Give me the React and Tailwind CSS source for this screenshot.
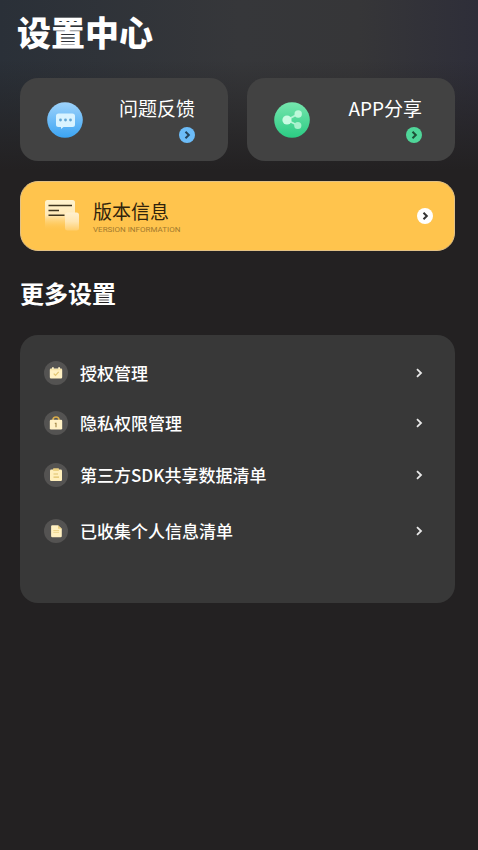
import { useId } from 'react';

const menuItems = [
  { label: '授权管理', icon: CalendarIcon, spacing: '' },
  { label: '隐私权限管理', icon: LockIcon, spacing: 'mt-[26px]' },
  { label: '第三方SDK共享数据清单', icon: ClipboardIcon, spacing: 'mt-7' },
  { label: '已收集个人信息清单', icon: FileIcon, spacing: 'mt-8' },
];

function FeedbackIcon() {
  const id = useId();
  return (
    <svg viewBox="0 0 36 36" className="size-9 shrink-0" aria-hidden="true">
      <defs>
        <linearGradient id={id} x1="0" y1="0" x2="0" y2="1">
          <stop offset="0" stopColor="#9fd3fb" />
          <stop offset="1" stopColor="#3ba4f3" />
        </linearGradient>
      </defs>
      <circle cx="18" cy="18" r="17.8" fill={`url(#${id})`} />
      <path
        d="M11.5 11.5h14A2.5 2.5 0 0 1 28 14v8.5a2.5 2.5 0 0 1-2.5 2.5h-9L14 27v-2h-2.5A2.5 2.5 0 0 1 9 22.5V14a2.5 2.5 0 0 1 2.5-2.5z"
        fill="#d9f3ff"
      />
      <g fill="#62a5d3">
        <circle cx="13.5" cy="18" r="1.4" />
        <circle cx="18.5" cy="18" r="1.4" />
        <circle cx="23.5" cy="18" r="1.4" />
      </g>
    </svg>
  );
}

function ShareIcon() {
  const id = useId();
  return (
    <svg viewBox="0 0 36 36" className="size-9 shrink-0" aria-hidden="true">
      <defs>
        <linearGradient id={id} x1="0" y1="0" x2="0" y2="1">
          <stop offset="0" stopColor="#76e6ae" />
          <stop offset="1" stopColor="#2bcb83" />
        </linearGradient>
      </defs>
      <circle cx="18" cy="18" r="17.8" fill={`url(#${id})`} />
      <path d="M24 12 13 18l11 5.5" fill="none" stroke="#b4f5d5" strokeWidth="1.8" />
      <circle cx="13" cy="18" r="4.6" fill="#c9fbe2" />
      <circle cx="24.2" cy="12" r="3.7" fill="#bdf8da" />
      <circle cx="23.8" cy="23.5" r="3.6" fill="#a6f2cc" />
    </svg>
  );
}

function VersionIcon() {
  const id = useId();
  return (
    <svg viewBox="0 0 36 32" className="h-8 w-9 shrink-0" aria-hidden="true">
      <defs>
        <linearGradient id={`${id}a`} x1="0" y1="0" x2="0" y2="1">
          <stop offset="0" stopColor="#fff3cf" />
          <stop offset="0.5" stopColor="#ffe9b8" />
          <stop offset="1" stopColor="#ffc44d" stopOpacity="0.1" />
        </linearGradient>
        <linearGradient id={`${id}b`} x1="0" y1="0" x2="0" y2="1">
          <stop offset="0" stopColor="#fff0cf" />
          <stop offset="0.5" stopColor="#ffe6b2" />
          <stop offset="1" stopColor="#ffce6c" />
        </linearGradient>
      </defs>
      <rect x="1" y="0" width="30" height="30" rx="2.5" fill={`url(#${id}a)`} />
      <rect x="21" y="12.5" width="14" height="18" rx="2.5" fill={`url(#${id}b)`} />
      <path d="M4.5 5.5H28M4.5 10.5H15M4.5 15.3h16" stroke="#3e3520" strokeWidth="1.6" fill="none" />
    </svg>
  );
}

function CalendarIcon() {
  return (
    <svg viewBox="0 0 24 24" className="size-6 shrink-0" aria-hidden="true">
      <circle cx="12" cy="12" r="12" fill="#545352" />
      <path
        d="M7 7.5h1V6.3h1.8v1.2h4.4V6.3H16v1.2h1a1.2 1.2 0 0 1 1.2 1.2v7.6a1.2 1.2 0 0 1-1.2 1.2H7a1.2 1.2 0 0 1-1.2-1.2V8.7A1.2 1.2 0 0 1 7 7.5z"
        fill="#fff1c4"
      />
      <path d="M6 8.7h12" stroke="#f3e0a2" strokeWidth="1" />
      <path d="m9.7 12.6 1.8 1.7 3.2-3.4" fill="none" stroke="#e3c673" strokeWidth="1.2" />
    </svg>
  );
}

function LockIcon() {
  return (
    <svg viewBox="0 0 24 24" className="size-6 shrink-0" aria-hidden="true">
      <circle cx="12" cy="12" r="12" fill="#545352" />
      <path d="M9 9.5v-.7a3 2.8 0 0 1 6 0v.7" fill="none" stroke="#d9ac4a" strokeWidth="1.6" />
      <rect x="5.8" y="8.8" width="12.4" height="9.7" rx="1.2" fill="#fff1c4" />
      <path d="M10.8 12.3H12v4" fill="none" stroke="#a98f4f" strokeWidth="1.2" />
    </svg>
  );
}

function ClipboardIcon() {
  return (
    <svg viewBox="0 0 24 24" className="size-6 shrink-0" aria-hidden="true">
      <circle cx="12" cy="12" r="12" fill="#545352" />
      <rect x="6" y="6.5" width="12" height="11.5" rx="1.2" fill="#ffefbb" />
      <rect x="9" y="5.3" width="6" height="2.8" rx="0.8" fill="#ecd182" />
      <path d="M9.5 11H14M9.5 14.2H15" stroke="#dfc16c" strokeWidth="1.2" />
    </svg>
  );
}

function FileIcon() {
  return (
    <svg viewBox="0 0 24 24" className="size-6 shrink-0" aria-hidden="true">
      <circle cx="12" cy="12" r="12" fill="#545352" />
      <path
        d="M8.3 6.2H14l3.8 3.6V17a1.2 1.2 0 0 1-1.2 1.2H8.3A1.2 1.2 0 0 1 7.1 17V7.4a1.2 1.2 0 0 1 1.2-1.2z"
        fill="#fff0c0"
      />
      <path d="M14 6.2v3.6h3.8z" fill="#ecd182" />
      <path d="M9.3 11.5H15M9.3 13.3H15" stroke="#ecd48b" strokeWidth="1" />
    </svg>
  );
}

function ArrowBadge({ className }) {
  return (
    <span className={`flex size-4 shrink-0 items-center justify-center rounded-full ${className}`}>
      <svg viewBox="0 0 16 16" className="size-4" fill="none" stroke="currentColor" strokeWidth="2" aria-hidden="true">
        <path d="m6.5 4.8 3.3 3.2-3.3 3.2" />
      </svg>
    </span>
  );
}

function QuickCard({ title, icon, badgeClass }) {
  return (
    <button
      type="button"
      className="flex h-[83px] flex-1 items-center justify-between rounded-[18px] bg-[#424242] pr-[33px] pl-[27px] text-white"
    >
      {icon}
      <span className="flex flex-col items-end gap-[5px] pb-[3px]">
        <span className="text-[19px] leading-7">{title}</span>
        <ArrowBadge className={badgeClass} />
      </span>
    </button>
  );
}

export default function App() {
  return (
    <div className="min-h-screen bg-[#232122] font-['Noto_Sans_CJK_SC','Noto_Sans',sans-serif]">
      <div className="bg-[linear-gradient(to_bottom,transparent_0px,transparent_60px,#232122_170px),linear-gradient(to_right,#2a3038,#36373a_50%,#363638_75%,#2e2e39)] pt-2.5 pr-[23px] pl-5">
        <h1 className="-ml-[3px] text-[34px] leading-[44px] font-black text-white">设置中心</h1>

        <div className="mt-6 flex gap-[19px]">
          <QuickCard title="问题反馈" icon={<FeedbackIcon />} badgeClass="bg-[#6cbcf8] text-[#24435c]" />
          <QuickCard title="APP分享" icon={<ShareIcon />} badgeClass="bg-[#4fd699] text-[#1d5138]" />
        </div>

        <button
          type="button"
          className="mt-5 flex h-[70px] w-full items-center rounded-[18px] border border-[#e3c184] bg-[#ffc44d] pr-[21px] pl-[23px] text-left"
        >
          <VersionIcon />
          <span className="ml-[13px] flex flex-1 flex-col">
            <span className="text-[19px] leading-7 text-[#30230c]">版本信息</span>
            <span className="font-[Roboto,sans-serif] text-[8px] leading-[10px] text-[#a37a2d]">VERSION INFORMATION</span>
          </span>
          <ArrowBadge className="bg-white text-[#343434]" />
        </button>
      </div>

      <section className="pr-[23px] pb-6 pl-5">
        <h2 className="mt-6 text-2xl leading-9 font-bold text-white">更多设置</h2>
        <ul className="mt-6 min-h-[268px] rounded-[18px] bg-[#383838] pt-[26px] pr-[29px] pb-[60px] pl-6">
          {menuItems.map(({ label, icon: Icon, spacing }) => (
            <li key={label} className={spacing}>
              <button type="button" className="flex w-full items-center text-left text-white">
                <Icon />
                <span className="ml-3 flex-1 text-[17px] leading-6 font-medium">{label}</span>
                <svg viewBox="0 0 14 14" className="size-3.5 shrink-0" fill="none" stroke="#e8e8e8" strokeWidth="1.8" aria-hidden="true">
                  <path d="m5 3.2 4 3.8-4 3.8" />
                </svg>
              </button>
            </li>
          ))}
        </ul>
      </section>
    </div>
  );
}
